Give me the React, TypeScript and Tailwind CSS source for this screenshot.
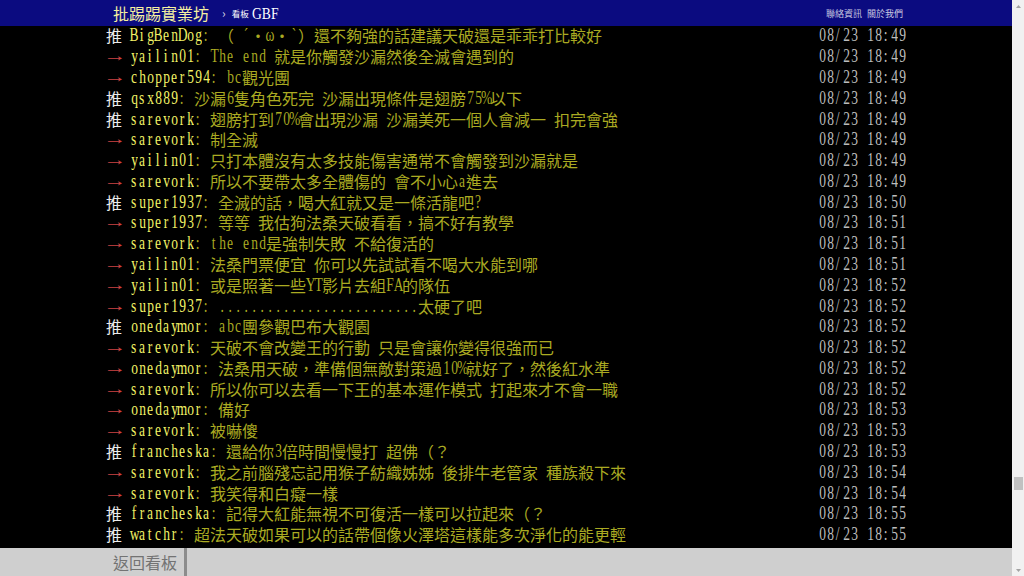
import React from 'react';

type Push = [string, string, string, string];

const pushes: Push[] = [
  ['推', 'BigBenDog', '（ ´・ω・`）還不夠強的話建議天破還是乖乖打比較好', '08/23 18:49'],
  ['→', 'yailin01', 'The end 就是你觸發沙漏然後全滅會遇到的', '08/23 18:49'],
  ['→', 'chopper594', 'bc觀光團', '08/23 18:49'],
  ['推', 'qsx889', '沙漏6隻角色死完 沙漏出現條件是翅膀75%以下', '08/23 18:49'],
  ['推', 'sarevork', '翅膀打到70%會出現沙漏 沙漏美死一個人會減一 扣完會強', '08/23 18:49'],
  ['→', 'sarevork', '制全滅', '08/23 18:49'],
  ['→', 'yailin01', '只打本體沒有太多技能傷害通常不會觸發到沙漏就是', '08/23 18:49'],
  ['→', 'sarevork', '所以不要帶太多全體傷的 會不小心a進去', '08/23 18:49'],
  ['推', 'super1937', '全滅的話，喝大紅就又是一條活龍吧?', '08/23 18:50'],
  ['→', 'super1937', '等等 我估狗法桑天破看看，搞不好有教學', '08/23 18:51'],
  ['→', 'sarevork', 'the end是強制失敗 不給復活的', '08/23 18:51'],
  ['→', 'yailin01', '法桑門票便宜 你可以先試試看不喝大水能到哪', '08/23 18:51'],
  ['→', 'yailin01', '或是照著一些YT影片去組FA的隊伍', '08/23 18:52'],
  ['→', 'super1937', '.........................太硬了吧', '08/23 18:52'],
  ['推', 'onedaymor', 'abc團參觀巴布大觀園', '08/23 18:52'],
  ['→', 'sarevork', '天破不會改變王的行動 只是會讓你變得很強而已', '08/23 18:52'],
  ['→', 'onedaymor', '法桑用天破，準備個無敵對策過10%就好了，然後紅水準', '08/23 18:52'],
  ['→', 'sarevork', '所以你可以去看一下王的基本運作模式 打起來才不會一職', '08/23 18:52'],
  ['→', 'onedaymor', '備好', '08/23 18:53'],
  ['→', 'sarevork', '被嚇傻', '08/23 18:53'],
  ['推', 'francheska', '還給你3倍時間慢慢打 超佛（？', '08/23 18:53'],
  ['→', 'sarevork', '我之前腦殘忘記用猴子紡織姊姊 後排牛老管家 種族殺下來', '08/23 18:54'],
  ['→', 'sarevork', '我笑得和白癡一樣', '08/23 18:54'],
  ['推', 'francheska', '記得大紅能無視不可復活一樣可以拉起來（？', '08/23 18:55'],
  ['推', 'watchr', '超法天破如果可以的話帶個像火澤塔這樣能多次淨化的能更輕', '08/23 18:55'],
  ['→', 'watchr', '鬆一點 亞特', '08/23 18:55'],
];

// one terminal cell per character: half width for latin, full width for CJK
const Cells = ({ text }: { text: string }) => (
  <>
    {Array.from(text).map((ch, i) =>
      ch.charCodeAt(0) < 0x2000 ? (
        <span key={i} className="inline-flex h-[20.79px] w-2 items-center justify-center align-top">
          <span className="inline-block scale-x-75 font-['Liberation_Serif',serif] text-[18px] leading-none">
            {ch === ' ' ? '\u00a0' : ch}
          </span>
        </span>
      ) : ch === '→' ? (
        <span key={i} className="inline-flex h-[20.79px] w-4 items-center justify-center pl-[2px] align-top">
          <span className="inline-block scale-x-[1.45] font-['Liberation_Serif',serif] text-[16px] leading-none">→</span>
        </span>
      ) : (
        <span key={i} className="inline-flex h-[20.79px] w-4 items-center justify-center align-top leading-none">
          {ch}
        </span>
      )
    )}
  </>
);

const PushRow = ({ push }: { push: Push }) => {
  const [tag, user, text, time] = push;
  return (
    <div className="flex h-[20.79px] whitespace-nowrap">
      <div className="flex-1">
        <span className={tag === '推' ? 'text-[#ececec]' : 'text-[#cc4444]'}>
          <Cells text={tag + ' '} />
        </span>
        <span className="text-[#f2f266]">
          <Cells text={user} />
        </span>
        <span className="text-[#aaaa22]">
          <Cells text={': ' + text} />
        </span>
      </div>
      <span className="text-[#bdbdbd]">
        <Cells text={time} />
      </span>
    </div>
  );
};

const App = () => {
  return (
    <div className="flex h-[576px] w-[1024px] overflow-hidden bg-black font-['Noto_Sans_CJK_TC',sans-serif]">
      <div className="flex min-w-0 flex-1 flex-col">
        {/* Top bar */}
        <header className="relative z-10 h-[26px] shrink-0 bg-[#0b0b80]">
          <div className="mx-auto flex h-full w-[800px] items-center pl-[7px] pr-[3px]">
            <span className="text-[16px] leading-none text-[#f5f0a0]">批踢踢實業坊</span>
            <span className="ml-[13px] text-[12px] leading-none text-[#d8d8e8]">›</span>
            <span className="ml-[6px] text-[8.5px] leading-none text-white">看板</span>
            <span className="ml-[3px] inline-block origin-left scale-x-80 font-['Liberation_Serif',serif] text-[17px] leading-none text-white">
              GBF
            </span>
            <div className="ml-auto flex gap-[5px] text-[9px] leading-none text-[#c8c8e0]">
              <span>聯絡資訊</span>
              <span>關於我們</span>
            </div>
          </div>
        </header>

        {/* Push list */}
        <main className="min-h-0 flex-1 overflow-hidden bg-black">
          <div className="mx-auto -mt-[1px] w-[800px] text-[16px]">
            {pushes.map((p, i) => (
              <PushRow key={i} push={p} />
            ))}
          </div>
        </main>

        {/* Bottom navigation */}
        <footer className="relative z-10 flex h-[28px] shrink-0 bg-[#cfcfcf]">
          <div className="flex items-center pl-[113px] pr-[7px] text-[16px] text-[#737373]">返回看板</div>
          <div className="w-[3px] bg-[#8c8c8c]" />
        </footer>
      </div>

      {/* Scrollbar */}
      <div className="flex w-[12px] shrink-0 flex-col bg-[#f1f1f1]">
        <div className="flex h-[12px] items-center justify-center">
          <svg width="5" height="3" viewBox="0 0 5 3">
            <path d="M2.5 0L5 3H0z" fill="#a3a3a3" />
          </svg>
        </div>
        <div className="flex-1 px-[1.5px]">
          <div className="mt-[465px] h-[13px] bg-[#c1c1c1]" />
        </div>
        <div className="flex h-[12px] items-center justify-center">
          <svg width="5" height="3" viewBox="0 0 5 3">
            <path d="M0 0H5L2.5 3z" fill="#a3a3a3" />
          </svg>
        </div>
      </div>
    </div>
  );
};

export default App;
